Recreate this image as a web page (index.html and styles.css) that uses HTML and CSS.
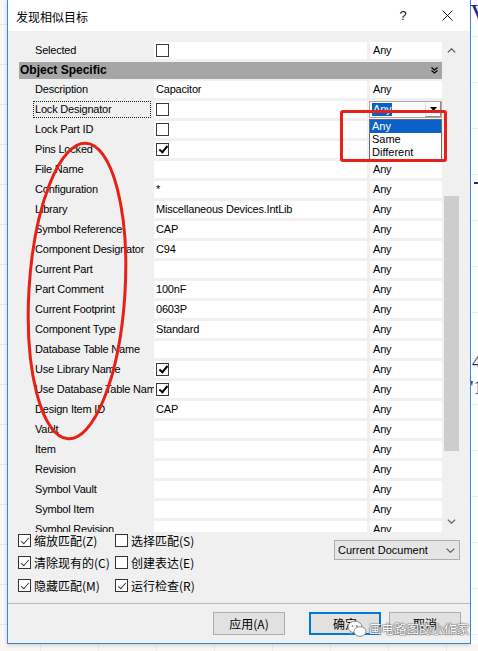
FILE: index.html
```html
<!DOCTYPE html>
<html>
<head>
<meta charset="utf-8">
<link rel="stylesheet" href="styles.css">
</head>
<body>
<div class="screen">
  <div class="dialog">
    <div class="titlebar">
      <span class="title">发现相似目标</span>
      <span class="tb-help">?</span>
      <span class="tb-close"><svg width="11" height="11" viewBox="0 0 11 11"><path d="M0.5 0.5 L10.5 10.5 M10.5 0.5 L0.5 10.5" stroke="#1a1a1a" stroke-width="1" fill="none"/></svg></span>
    </div>
    <div class="body">
      <div class="grid-wrap">
        <div class="grid">
          <div class="row first"><div class="label">Selected</div><div class="val"><span class="cb"></span></div><div class="any">Any</div></div>
          <div class="row header"><span>Object Specific</span><svg class="dchev" width="7" height="7" viewBox="0 0 7 7"><path d="M0.5 0.5 L3.5 3 L6.5 0.5 M0.5 3.5 L3.5 6 L6.5 3.5" stroke="#000" stroke-width="1.3" fill="none"/></svg></div>
          <div class="row"><div class="label">Description</div><div class="val">Capacitor</div><div class="any">Any</div></div>
          <div class="row"><div class="label focus"><span>Lock Designator</span></div><div class="val"><span class="cb"></span></div><div class="any combo"><span class="sel">Any</span><span class="cbtn"><svg width="7" height="4" viewBox="0 0 7 4"><path d="M0 0 L7 0 L3.5 4 Z" fill="#000"/></svg></span></div></div>
          <div class="row"><div class="label">Lock Part ID</div><div class="val"><span class="cb"></span></div><div class="any">Any</div></div>
          <div class="row"><div class="label">Pins Locked</div><div class="val"><span class="cb on"></span></div><div class="any">Any</div></div>
          <div class="row"><div class="label">File Name</div><div class="val"></div><div class="any">Any</div></div>
          <div class="row"><div class="label">Configuration</div><div class="val">*</div><div class="any">Any</div></div>
          <div class="row"><div class="label">Library</div><div class="val">Miscellaneous Devices.IntLib</div><div class="any">Any</div></div>
          <div class="row"><div class="label">Symbol Reference</div><div class="val">CAP</div><div class="any">Any</div></div>
          <div class="row"><div class="label">Component Designator</div><div class="val">C94</div><div class="any">Any</div></div>
          <div class="row"><div class="label">Current Part</div><div class="val"></div><div class="any">Any</div></div>
          <div class="row"><div class="label">Part Comment</div><div class="val">100nF</div><div class="any">Any</div></div>
          <div class="row"><div class="label">Current Footprint</div><div class="val">0603P</div><div class="any">Any</div></div>
          <div class="row"><div class="label">Component Type</div><div class="val">Standard</div><div class="any">Any</div></div>
          <div class="row"><div class="label">Database Table Name</div><div class="val"></div><div class="any">Any</div></div>
          <div class="row"><div class="label">Use Library Name</div><div class="val"><span class="cb on"></span></div><div class="any">Any</div></div>
          <div class="row"><div class="label">Use Database Table Name</div><div class="val"><span class="cb on"></span></div><div class="any">Any</div></div>
          <div class="row"><div class="label">Design Item ID</div><div class="val">CAP</div><div class="any">Any</div></div>
          <div class="row"><div class="label">Vault</div><div class="val"></div><div class="any">Any</div></div>
          <div class="row"><div class="label">Item</div><div class="val"></div><div class="any">Any</div></div>
          <div class="row"><div class="label">Revision</div><div class="val"></div><div class="any">Any</div></div>
          <div class="row"><div class="label">Symbol Vault</div><div class="val"></div><div class="any">Any</div></div>
          <div class="row"><div class="label">Symbol Item</div><div class="val"></div><div class="any">Any</div></div>
          <div class="row"><div class="label">Symbol Revision</div><div class="val"></div><div class="any">Any</div></div>
        </div>
        <div class="scrollbar">
          <div class="sb-arrow"><svg width="9" height="5" viewBox="0 0 9 5"><path d="M0.8 4.4 L4.5 0.8 L8.2 4.4" stroke="#606060" stroke-width="1.3" fill="none"/></svg></div>
          <div class="sb-gap"></div>
          <div class="sb-thumb"></div>
          <div class="sb-fill"></div>
          <div class="sb-arrow down"><svg width="9" height="5" viewBox="0 0 9 5"><path d="M0.8 0.6 L4.5 4.2 L8.2 0.6" stroke="#606060" stroke-width="1.3" fill="none"/></svg></div>
        </div>
      </div>
      <div class="options">
        <div class="checks">
          <label class="opt"><span class="wcb on"></span>缩放匹配(<u>Z</u>)</label>
          <label class="opt"><span class="wcb"></span>选择匹配(<u>S</u>)</label>
          <label class="opt"><span class="wcb on"></span>清除现有的(<u>C</u>)</label>
          <label class="opt"><span class="wcb"></span>创建表达(<u>E</u>)</label>
          <label class="opt"><span class="wcb on"></span>隐藏匹配(<u>M</u>)</label>
          <label class="opt"><span class="wcb on"></span>运行检查(<u>R</u>)</label>
        </div>
        <div class="scope">
          <span>Current Document</span>
          <svg width="9" height="5" viewBox="0 0 9 5"><path d="M0.6 0.6 L4.5 4.3 L8.4 0.6" stroke="#505050" stroke-width="1.1" fill="none"/></svg>
        </div>
      </div>
    </div>
    <div class="footer">
      <button class="btn apply">应用(<u>A</u>)</button>
      <button class="btn ok">确定</button>
      <button class="btn">取消</button>
    </div>
  </div>
  <div class="bg-right">
    <span class="glyph g-v">V</span>
    <span class="navy-line"></span>
    <span class="glyph g-4">4</span>
    <span class="glyph g-1">'1</span>
  </div>

  <div class="droplist">
    <div class="item hi">Any</div>
    <div class="item">Same</div>
    <div class="item">Different</div>
  </div>
  <div class="red-box"></div>
  <svg class="annot" width="478" height="651" viewBox="0 0 478 651">
    <ellipse cx="77" cy="291" rx="48" ry="148" transform="rotate(3.5 77 291)" fill="none" stroke="#e62117" stroke-width="3"/>
  </svg>
  <div class="watermark">
    <svg width="20" height="18" viewBox="0 0 20 18"><ellipse cx="8" cy="7" rx="7" ry="5.8" fill="#fff" stroke="#8a8a8a" stroke-width="1"/><path d="M4 11.5 L3 14 L6.5 12.3" fill="#fff" stroke="#8a8a8a" stroke-width="1"/><ellipse cx="13" cy="11.5" rx="6" ry="4.8" fill="#fff" stroke="#8a8a8a" stroke-width="1"/><circle cx="5.5" cy="6" r="0.9" fill="#8a8a8a"/><circle cx="10" cy="6" r="0.9" fill="#8a8a8a"/></svg>
    <span>画电路图的小作家</span>
  </div>
</div>
</body>
</html>
```

FILE: styles.css
```css
* { box-sizing: border-box; }
html, body { margin: 0; padding: 0; }
body {
  width: 478px;
  height: 651px;
  overflow: hidden;
  font-family: "Liberation Sans", "Noto Sans CJK SC", sans-serif;
  font-size: 11px;
  color: #000;
  background: #f5f5f5;
}
.screen {
  position: relative;
  width: 478px;
  height: 651px;
  display: flex;
  align-items: flex-start;
  background-color: #f7f7f7;
  background-image:
    repeating-linear-gradient(to bottom, transparent 0 24px, #e6e6e6 24px 25px, transparent 25px 40px),
    repeating-linear-gradient(to right, transparent 0 40px, #ebebeb 40px 41px, transparent 41px 58px);
}
.dialog {
  margin-left: 7px;
  width: 464px;
  height: 644px;
  flex: none;
  border: 1px solid #3d86d4;
  border-top: none;
  background: #f0f0f0;
  display: flex;
  flex-direction: column;
  box-shadow: 0 1px 4px rgba(0,0,0,0.18);
}
.titlebar {
  height: 31px;
  flex: none;
  background: #fff;
  display: flex;
  align-items: center;
  padding-left: 8px;
  font-family: "Noto Sans CJK SC", sans-serif;
  font-size: 12px;
  color: #000;
}
.title { flex: 1; padding-top: 1px; }
.tb-help {
  width: 44px;
  text-align: center;
  font-family: "Liberation Sans", sans-serif;
  font-size: 13px;
  color: #111;
}
.tb-close {
  width: 45px;
  display: flex;
  justify-content: center;
  align-items: center;
}
.body { flex: none; display: flex; flex-direction: column; }
.grid-wrap {
  margin-top: 9px;
  height: 492px;
  display: flex;
  padding-left: 11px;
}
.grid {
  width: 423px;
  height: 492px;
  overflow: hidden;
  padding-top: 2px;
  letter-spacing: -0.2px;
}
.row {
  display: flex;
  height: 17px;
  margin-bottom: 3px;
  line-height: 17px;
  white-space: nowrap;
}
.row.header { margin-bottom: 2px; }
.label {
  width: 135px;
  padding-left: 16px;
  overflow: hidden;
  flex: none;
}
.label.focus { padding-left: 14px; }
.label.focus span {
  display: block;
  width: 118px;
  height: 17px;
  line-height: 15px;
  border: 1px dotted #222;
  padding-left: 1px;
}
.val {
  width: 213px;
  flex: none;
  background: #fff;
  padding-left: 2px;
  overflow: hidden;
  display: flex;
  align-items: center;
}
.any {
  width: 72px;
  flex: none;
  margin-left: 3px;
  background: #fff;
  padding-left: 3px;
}
.any.combo {
  margin-left: 2px;
  width: 73px;
  border: 1px solid #a8a8a8;
  display: flex;
  align-items: center;
  padding-left: 2px;
  line-height: 13px;
}
.any.combo .sel {
  background: #0a62c8;
  color: #fff;
  padding: 0 1px;
  height: 13px;
}
.cbtn {
  margin-left: auto;
  width: 16px;
  height: 15px;
  border-left: 1px solid #e2e2e2;
  border-bottom: 1px solid #8a8a8a;
  border-right: 1px solid #8a8a8a;
  display: flex;
  align-items: center;
  justify-content: center;
}
.header {
  background: #a6a6a6;
  font-weight: bold;
  font-size: 12px;
  letter-spacing: 0;
  padding-left: 1px;
  padding-right: 4px;
  justify-content: space-between;
  align-items: center;
}
.cb {
  display: block;
  width: 13px;
  height: 13px;
  border: 1px solid #3a3a3a;
  background: #fff;
  position: relative;
}
.cb.on::after {
  content: "";
  position: absolute;
  left: 3.5px;
  top: 0px;
  width: 3px;
  height: 7px;
  border: solid #000;
  border-width: 0 2px 2px 0;
  transform: rotate(40deg);
}
.scrollbar {
  width: 16px;
  margin-left: 1px;
  display: flex;
  flex-direction: column;
}
.sb-arrow {
  height: 20px;
  display: flex;
  align-items: center;
  justify-content: center;
}
.sb-arrow.down { height: 22px; }
.sb-gap { height: 136px; }
.sb-thumb {
  height: 255px;
  width: 15px;
  margin-left: 1px;
  background: #cdcdcd;
}
.sb-fill { flex: 1; }
.options {
  height: 71px;
  display: flex;
  align-items: flex-start;
  padding-left: 10px;
  padding-right: 10px;
}
.checks {
  display: grid;
  grid-template-columns: 97px auto;
  grid-template-rows: 22px 23px 22px;
  padding-top: 1px;
}
.opt {
  display: flex;
  align-items: center;
  height: 15px;
  font-family: "Noto Sans CJK SC", sans-serif;
  font-size: 12px;
  line-height: 15px;
  color: #000;
  white-space: nowrap;
}
.opt u { text-decoration: none; }
.wcb {
  width: 13px;
  height: 13px;
  border: 1px solid #333;
  background: #fff;
  margin-right: 3px;
  flex: none;
  position: relative;
}
.wcb.on::after {
  content: "";
  position: absolute;
  left: 3.5px;
  top: 0.5px;
  width: 3px;
  height: 7px;
  border: solid #333;
  border-width: 0 1.3px 1.3px 0;
  transform: rotate(42deg);
}
.scope {
  margin-left: auto;
  margin-top: 8px;
  width: 126px;
  height: 20px;
  background: #e5e5e5;
  border: 1px solid #adadad;
  display: flex;
  align-items: center;
  padding-left: 3px;
  padding-right: 4px;
  justify-content: space-between;
  font-size: 11px;
}
.footer {
  flex: 1;
  border-top: 1px solid #bdbdbd;
  display: flex;
  justify-content: flex-end;
  align-items: flex-start;
  padding-top: 8px;
  padding-right: 9px;
}
.btn {
  width: 72px;
  height: 23px;
  margin: 0;
  padding: 0;
  background: #e1e1e1;
  border: 1px solid #adadad;
  font-family: "Noto Sans CJK SC", sans-serif;
  font-size: 12px;
  color: #000;
  line-height: 20px;
}
.btn u { text-decoration: none; }
.btn.apply { margin-right: 24px; }
.btn.ok { margin-right: 8px; border: 2px solid #0078d7; }
.bg-right {
  position: relative;
  flex: 1;
  height: 644px;
  background-color: #fdfdfd;
  background-image: repeating-linear-gradient(to bottom, transparent 0 36px, #ececec 36px 37px, transparent 37px 46px);
  overflow: hidden;
}
.glyph {
  position: absolute;
  left: 1px;
  font-family: "Liberation Serif", serif;
  color: #1d2a7a;
  line-height: 1;
}
.g-v { top: 0px; font-size: 28px; left: -1px; }
.g-4 { top: 352px; font-size: 19px; }
.g-1 { top: 378px; font-size: 19px; left: -1px; }
.navy-line {
  position: absolute;
  left: 3px;
  top: 182px;
  width: 10px;
  height: 2px;
  background: #1d2a7a;
}
.droplist {
  position: absolute;
  left: 369px;
  top: 119px;
  width: 73px;
  height: 41px;
  background: #fff;
  border: 1px solid #6b6b6b;
  line-height: 13px;
}
.droplist .item { height: 13px; padding-left: 2px; }
.droplist .item.hi { background: #0a62c8; color: #fff; }
.red-box {
  position: absolute;
  left: 340px;
  top: 110px;
  width: 107px;
  height: 52px;
  border: 3px solid #e62117;
  border-radius: 3px;
}
.annot {
  position: absolute;
  left: 0;
  top: 0;
  pointer-events: none;
}
.watermark {
  position: absolute;
  left: 347px;
  top: 619px;
  display: flex;
  align-items: center;
  gap: 2px;
  font-family: "Noto Sans CJK SC", sans-serif;
  font-size: 12.5px;
  color: #fff;
  text-shadow: 0 0 1px #555, 0 0 1px #555, 0 0 2px #777;
}
```
